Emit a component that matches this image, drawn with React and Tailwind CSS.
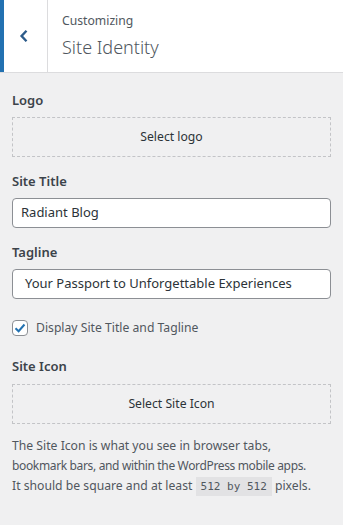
import React from 'react';

function App() {
  return (
    <div className="w-[343px] h-[525px] overflow-hidden bg-[#f0f0f1] text-[#1d2327]" style={{ fontFamily: '"Noto Sans", "Open Sans", sans-serif' }}>
      {/* header */}
      <header className="flex h-[73px] bg-white border-b border-[#dcdcde]">
        <div className="w-[48px] flex items-center justify-center border-l-4 border-[#2271b1] border-r border-r-[#dcdcde]">
          <svg width="12" height="14" viewBox="0 0 12 14" className="text-[#2c5b8a] ml-[-3px]">
            <path d="M8.5 1.8 L3.6 7 L8.5 12.2" fill="none" stroke="currentColor" strokeWidth="2.4" />
          </svg>
        </div>
        <div className="pl-[14px] pt-[12px]">
          <div className="text-[12.2px] leading-[18px] text-[#50575e]">Customizing</div>
          <div className="text-[18px] leading-[28px] font-light text-[#50575e] mt-[3px]">Site Identity</div>
        </div>
      </header>

      <main className="px-3 pt-[18px]">
        <div className="text-[13px] font-semibold leading-[18px] text-[#3c434a]">Logo</div>
        <button className="mt-[8px] w-full h-[40px] border border-dashed border-[#c3c4c7] text-[12.2px] text-[#2c3338]">Select logo</button>

        <div className="mt-[15px] text-[13px] font-semibold leading-[18px] text-[#3c434a]">Site Title</div>
        <div className="mt-[8px] h-[30px] bg-white border border-[#8c8f94] rounded-[4px] px-[8px] flex items-center text-[13px] text-[#2c3338]">Radiant Blog</div>

        <div className="mt-[15px] text-[13px] font-semibold leading-[18px] text-[#3c434a]">Tagline</div>
        <div className="mt-[8px] h-[30px] bg-white border border-[#8c8f94] rounded-[4px] px-[12px] flex items-center text-[13px] text-[#2c3338] whitespace-nowrap">Your Passport to Unforgettable Experiences</div>

        <label className="mt-[20px] flex items-center gap-[8px] text-[12.2px] text-[#50575e]">
          <span className="w-[16px] h-[16px] bg-white border border-[#8c8f94] rounded-[4px] flex items-center justify-center">
            <svg width="14" height="14" viewBox="0 0 14 14">
              <path d="M2.5 7.2 L5.6 10.2 L11.5 3.5" fill="none" stroke="#2271b1" strokeWidth="2" />
            </svg>
          </span>
          Display Site Title and Tagline
        </label>

        <div className="mt-[20px] text-[13px] font-semibold leading-[18px] text-[#3c434a]">Site Icon</div>
        <button className="mt-[9px] w-full h-[40px] border border-dashed border-[#c3c4c7] text-[12.2px] text-[#2c3338]">Select Site Icon</button>

        <p className="mt-[12px] text-[12.2px] leading-[20px] text-[#50575e] whitespace-nowrap">
          The Site Icon is what you see in browser tabs,<br />
          <span className="tracking-[-0.35px] text-[12px]">bookmark bars, and within the WordPress mobile apps.</span><br />
          It should be square and at least{' '}
          <code className="bg-[#dcdcde]/70 px-[5px] py-[3px] text-[11px]" style={{ fontFamily: '"DejaVu Sans Mono", monospace' }}>512 by 512</code>{' '}
          pixels.
        </p>
      </main>
    </div>
  );
}

export default App;
